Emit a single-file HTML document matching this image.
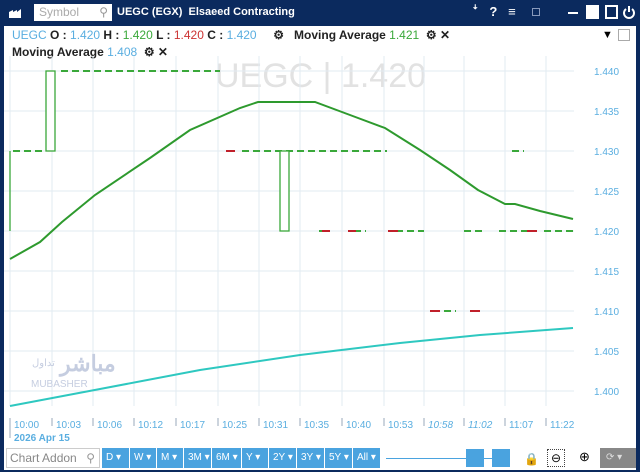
<!DOCTYPE html><html><head><meta charset="utf-8"><style>
*{margin:0;padding:0;box-sizing:border-box}
body{width:640px;height:472px;overflow:hidden;background:#0b2a5e;font-family:"Liberation Sans",sans-serif;position:relative}
.top{position:absolute;left:0;top:0;width:640px;height:26px;background:#0b2a5e}
.main{position:absolute;left:4px;top:26px;width:632px;height:420px;background:#fff}
.tb{position:absolute;left:4px;top:446px;width:632px;height:24px;background:#fff}
.leg{position:absolute;font-size:12px;font-weight:bold;color:#222;white-space:nowrap}
.btn{position:absolute;top:2px;height:20px;background:#4aa3df;color:#fff;font-size:10px;line-height:20px;padding-left:4px;border-right:1px solid #fff}
</style></head><body>
<div class="top">
<svg style="position:absolute;left:8px;top:6px" width="14" height="13"><path d="M1 12V6l4-2v2l4-2v2l4-3v9z" fill="#fff"/></svg>
<div style="position:absolute;left:34px;top:4px;width:78px;height:17px;background:#fff;color:#aaa;font-size:12px;line-height:17px;padding-left:5px">Symbol<span style="position:absolute;right:4px;top:0;color:#999">&#9906;</span></div>
<div style="position:absolute;left:117px;top:6px;color:#fff;font-weight:bold;font-size:11px">UEGC (EGX)&nbsp; Elsaeed Contracting</div>
<div style="position:absolute;left:472px;top:4px;color:#fff;font-size:13px;font-weight:bold;letter-spacing:0">ꜜ&nbsp;&nbsp; ?&nbsp;&nbsp; ≡</div>
<div style="position:absolute;left:532px;top:8px;width:8px;height:8px;border:1px solid #8899bb"></div>
<div style="position:absolute;left:568px;top:12px;width:10px;height:2px;background:#fff"></div>
<div style="position:absolute;left:586px;top:5px;width:13px;height:14px;background:#fff"></div>
<div style="position:absolute;left:605px;top:5px;width:13px;height:14px;border:2px solid #fff"></div>
<svg style="position:absolute;left:622px;top:5px" width="14" height="14"><path d="M4 4a5 5 0 1 0 6 0M7 1v6" stroke="#fff" stroke-width="2" fill="none"/></svg>
</div>
<div class="main">
<div class="leg" style="left:8px;top:2px"><span style="color:#5aaee0;font-weight:normal">UEGC</span> O : <span style="color:#5aaee0;font-weight:normal">1.420</span> H : <span style="color:#3aa83a;font-weight:normal">1.420</span> L : <span style="color:#c33;font-weight:normal">1.420</span> C : <span style="color:#5aaee0;font-weight:normal">1.420</span> &nbsp;&nbsp;&nbsp;&nbsp;⚙&nbsp;&nbsp; Moving Average <span style="color:#3aa83a;font-weight:normal">1.421</span> &nbsp;⚙ ✕</div>
<div class="leg" style="left:8px;top:19px">Moving Average <span style="color:#5aaee0;font-weight:normal">1.408</span> &nbsp;⚙ ✕</div>
<div style="position:absolute;left:598px;top:3px;font-size:11px">▼</div>
<div style="position:absolute;left:614px;top:3px;width:12px;height:12px;border:1px solid #aaa"></div>
<div style="position:absolute;left:211px;top:31px;font-size:34px;color:#e2e2e2">UEGC | 1.420</div>
<svg style="position:absolute;left:0;top:0" width="632" height="420">
<g stroke="#e2ebf2" stroke-width="1">
<path d="M0 45H570M0 85H570M0 125H570M0 165H570M0 205H570M0 245H570M0 285H570M0 325H570M0 365H570"/>
<path d="M6 30V380M48 30V380M89 30V380M130 30V380M172 30V380M214 30V380M255 30V380M296 30V380M338 30V380M380 30V380M420 30V380M460 30V380M501 30V380M542 30V380"/>
</g>
<g fill="#5aaee0" font-size="10" font-family="Liberation Sans">
<text x="590" y="49">1.440</text><text x="590" y="89">1.435</text><text x="590" y="129">1.430</text><text x="590" y="169">1.425</text><text x="590" y="209">1.420</text><text x="590" y="249">1.415</text><text x="590" y="289">1.410</text><text x="590" y="329">1.405</text><text x="590" y="369">1.400</text>
</g>
<g stroke="#3aa83a" stroke-width="2" stroke-dasharray="7,4" fill="none">
<path d="M57 45H216M9 125H40M238 125H383M315 205H325M350 205H362M392 205H420M460 205H478M495 205H525M540 205H570M440 285H452M508 125H520"/>
</g>
<g stroke="#c0202a" stroke-width="2"><path d="M222 125H231M318 205H326M344 205H352M384 205H394M426 285H436M466 285H476M523 205H533"/></g>
<g stroke="#3aa83a" stroke-width="1.3" fill="#fff"><path d="M6 125V205"/><rect x="42" y="45" width="9" height="80"/><rect x="276" y="125" width="9" height="80"/></g>
<polyline fill="none" stroke="#2e9a2e" stroke-width="2" points="6,233 36,216 58,196 91,169 146,132 186,104 236,82 254,76 311,76 346,89 381,102 416,124 446,144 474,164 501,178 511,178 536,185 569,193"/>
<polyline fill="none" stroke="#2ec8c0" stroke-width="2" points="6,380 96,363 196,344 296,329 396,317 476,309 569,302"/>
<g fill="#c5cde0" font-family="Liberation Sans"><text x="56" y="345" font-size="22" font-weight="bold">مباشر</text><text x="28" y="340" font-size="10">تداول</text><text x="27" y="361" font-size="10">MUBASHER</text></g>
<g fill="#5aaee0" font-size="10" font-family="Liberation Sans"><text x="10" y="402">10:00</text><text x="52" y="402">10:03</text><text x="93" y="402">10:06</text><text x="134" y="402">10:12</text><text x="176" y="402">10:17</text><text x="218" y="402">10:25</text><text x="259" y="402">10:31</text><text x="300" y="402">10:35</text><text x="342" y="402">10:40</text><text x="384" y="402">10:53</text><text x="424" y="402" font-style="italic">10:58</text><text x="464" y="402" font-style="italic">11:02</text><text x="505" y="402">11:07</text><text x="546" y="402">11:22</text><text x="10" y="415" font-weight="bold">2026 Apr 15</text></g>
<g stroke="#9ab" stroke-width="1"><path d="M6 392V412M48 392V400M89 392V400M130 392V400M172 392V400M214 392V400M255 392V400M296 392V400M338 392V400M380 392V400M420 392V400M460 392V400M501 392V400M542 392V400"/></g>
</svg>
</div>
<div class="tb">
<div style="position:absolute;left:2px;top:2px;width:94px;height:20px;border:1px solid #ccc;color:#888;font-size:12px;line-height:18px;padding-left:3px">Chart Addon<span style="position:absolute;right:4px;color:#999">&#9906;</span></div>
<div class="btn" style="left:98px;width:28px">D ▾</div><div class="btn" style="left:126px;width:27px">W ▾</div><div class="btn" style="left:153px;width:27px">M ▾</div><div class="btn" style="left:180px;width:28px">3M ▾</div><div class="btn" style="left:208px;width:30px">6M ▾</div><div class="btn" style="left:238px;width:27px">Y ▾</div><div class="btn" style="left:265px;width:28px">2Y ▾</div><div class="btn" style="left:293px;width:28px">3Y ▾</div><div class="btn" style="left:321px;width:28px">5Y ▾</div><div class="btn" style="left:349px;width:28px">All ▾</div>
<div style="position:absolute;left:382px;top:12px;width:110px;height:1px;background:#4aa3df"></div>
<div style="position:absolute;left:462px;top:3px;width:18px;height:18px;background:#4aa3df"></div>
<div style="position:absolute;left:488px;top:3px;width:18px;height:18px;background:#4aa3df"></div>
<div style="position:absolute;left:520px;top:6px;font-size:12px">🔒</div>
<div style="position:absolute;left:543px;top:3px;width:18px;height:18px;border:1px dotted #444;text-align:center;font-size:12px;line-height:16px">⊖</div>
<div style="position:absolute;left:575px;top:3px;font-size:13px">⊕</div>
<div style="position:absolute;left:596px;top:2px;width:36px;height:20px;background:#888;color:#ddd;font-size:10px;line-height:20px;padding-left:6px">⟳ ▾</div>
</div>
</body></html>
